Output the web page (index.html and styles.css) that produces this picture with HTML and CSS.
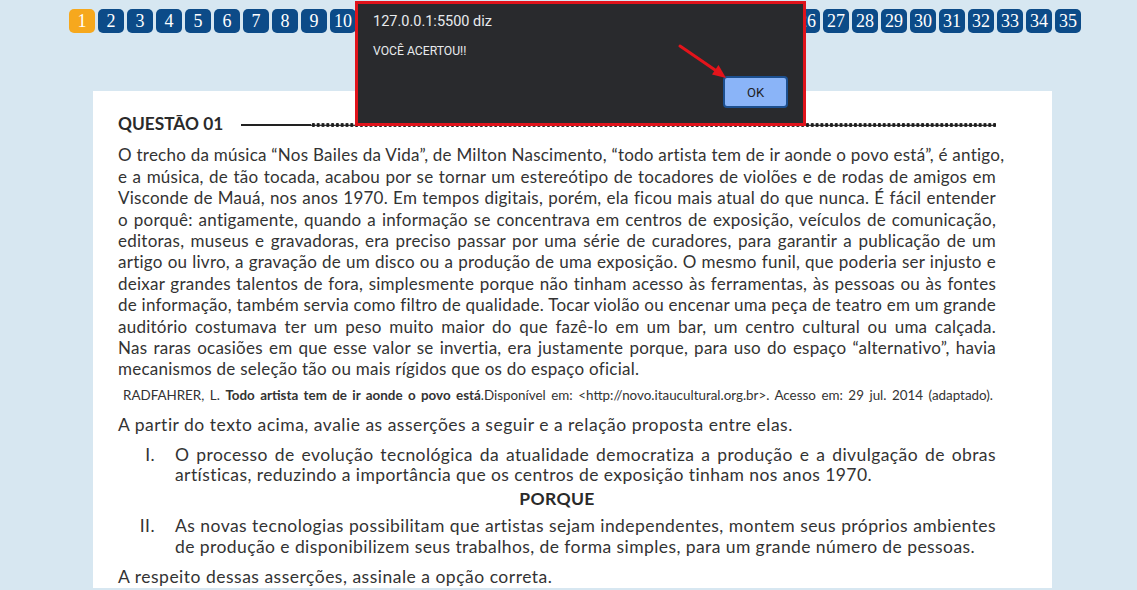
FILE: index.html
```html
<!DOCTYPE html>
<html lang="pt-BR">
<head>
<meta charset="utf-8">
<title>Questão 01</title>
<link rel="stylesheet" href="styles.css">
</head>
<body>
<nav class="pager">
  <span class="pg pg-active">1</span><span class="pg">2</span><span class="pg">3</span><span class="pg">4</span><span class="pg">5</span><span class="pg">6</span><span class="pg">7</span><span class="pg">8</span><span class="pg">9</span><span class="pg">10</span><span class="pg">11</span><span class="pg">12</span><span class="pg">13</span><span class="pg">14</span><span class="pg">15</span><span class="pg">16</span><span class="pg">17</span><span class="pg">18</span><span class="pg">19</span><span class="pg">20</span><span class="pg">21</span><span class="pg">22</span><span class="pg">23</span><span class="pg">24</span><span class="pg">25</span><span class="pg">26</span><span class="pg">27</span><span class="pg">28</span><span class="pg">29</span><span class="pg">30</span><span class="pg">31</span><span class="pg">32</span><span class="pg">33</span><span class="pg">34</span><span class="pg">35</span>
</nav>

<main class="sheet">
  <div class="q-head">
    <span class="q-title">QUESTÃO 01</span>
    <span class="q-solid"></span>
    <span class="q-dots"></span>
  </div>

  <div class="text">
    <span class="ln">O trecho da música “Nos Bailes da Vida”, de Milton Nascimento, “todo artista tem de ir aonde o povo está”, é antigo,</span>
    <span class="ln">e a música, de tão tocada, acabou por se tornar um estereótipo de tocadores de violões e de rodas de amigos em</span>
    <span class="ln">Visconde de Mauá, nos anos 1970. Em tempos digitais, porém, ela ficou mais atual do que nunca. É fácil entender</span>
    <span class="ln">o porquê: antigamente, quando a informação se concentrava em centros de exposição, veículos de comunicação,</span>
    <span class="ln">editoras, museus e gravadoras, era preciso passar por uma série de curadores, para garantir a publicação de um</span>
    <span class="ln">artigo ou livro, a gravação de um disco ou a produção de uma exposição. O mesmo funil, que poderia ser injusto e</span>
    <span class="ln">deixar grandes talentos de fora, simplesmente porque não tinham acesso às ferramentas, às pessoas ou às fontes</span>
    <span class="ln">de informação, também servia como filtro de qualidade. Tocar violão ou encenar uma peça de teatro em um grande</span>
    <span class="ln">auditório costumava ter um peso muito maior do que fazê-lo em um bar, um centro cultural ou uma calçada.</span>
    <span class="ln">Nas raras ocasiões em que esse valor se invertia, era justamente porque, para uso do espaço “alternativo”, havia</span>
    <span class="ln ln-last">mecanismos de seleção tão ou mais rígidos que os do espaço oficial.</span>
  </div>

  <p class="ref">RADFAHRER, L. <b>Todo artista tem de ir aonde o povo está</b>.Disponível em: &lt;http://novo.itaucultural.org.br&gt;. Acesso em: 29 jul. 2014 (adaptado).</p>

  <p class="lead">A partir do texto acima, avalie as asserções a seguir e a relação proposta entre elas.</p>

  <div class="item item-1">
    <span class="num">I.</span>
    <div class="item-text">
      <span class="ln">O processo de evolução tecnológica da atualidade democratiza a produção e a divulgação de obras</span>
      <span class="ln ln-last">artísticas, reduzindo a importância que os centros de exposição tinham nos anos 1970.</span>
    </div>
  </div>

  <p class="porque">PORQUE</p>

  <div class="item item-2">
    <span class="num">II.</span>
    <div class="item-text">
      <span class="ln">As novas tecnologias possibilitam que artistas sejam independentes, montem seus próprios ambientes</span>
      <span class="ln ln-last">de produção e disponibilizem seus trabalhos, de forma simples, para um grande número de pessoas.</span>
    </div>
  </div>

  <p class="lead lead-end">A respeito dessas asserções, assinale a opção correta.</p>
</main>

<div class="dialog" role="alertdialog">
  <p class="dlg-title">127.0.0.1:5500 diz</p>
  <p class="dlg-msg">VOCÊ ACERTOU!!</p>
  <button class="dlg-ok">OK</button>
</div>

<svg class="arrow" width="60" height="45" viewBox="0 0 60 45">
  <line x1="4" y1="3" x2="42" y2="29" stroke="#e3141b" stroke-width="3" stroke-linecap="round"/>
  <polygon points="50,35 36,31.5 42.5,22" fill="#e3141b"/>
</svg>
</body>
</html>
```

FILE: styles.css
```css
* { box-sizing: border-box; }

html, body {
  margin: 0;
  padding: 0;
}

body {
  width: 1137px;
  height: 590px;
  overflow: hidden;
  background: #d7e7f1;
  position: relative;
}

/* pagination */
.pager {
  display: flex;
  gap: 3px;
  padding: 9px 0 0 69px;
  height: 33px;
}

.pg {
  flex: 0 0 26px;
  height: 24px;
  border-radius: 5px;
  background: #0c4b88;
  color: #fff;
  font-family: "Liberation Serif", serif;
  font-size: 18px;
  display: flex;
  align-items: center;
  justify-content: center;
  line-height: 1;
}

.pg-active {
  background: #f6a81d;
}

/* question sheet */
.sheet {
  margin: 58px 0 0 93px;
  width: 959px;
  height: 497px;
  background: #fff;
  padding: 22px 56px 0 25px;
  color: #333;
  font-family: Lato, "Liberation Sans", sans-serif;
}

.q-head {
  display: flex;
  align-items: center;
  height: 20px;
}

.q-title {
  font-weight: 700;
  font-size: 17.3px;
  color: #2a2a2a;
}

.q-solid {
  width: 70px;
  height: 2px;
  margin-left: 18px;
  margin-top: 4px;
  background: #222;
}

.q-dots {
  flex: 1;
  height: 6px;
  margin-top: 4px;
  background:
    radial-gradient(circle, #1e1e1e 1.7px, transparent 2.1px) 0 0 / 4.8px 6px repeat-x,
    linear-gradient(#444, #444) 0 2.5px / 100% 1px no-repeat;
}

.ln {
  display: block;
  text-align: justify;
  text-align-last: justify;
  white-space: nowrap;
}

.ln-last {
  text-align-last: left;
}

.text {
  margin-top: 11.3px;
  font-size: 17px;
  line-height: 21.4px;
  letter-spacing: 0.25px;
}

.ref {
  margin: 6.3px 0 0 5px;
  width: 870px;
  font-size: 13.4px;
  line-height: 18px;
  text-align: justify;
  text-align-last: justify;
  white-space: nowrap;
}

.ref b {
  font-weight: 700;
}

.lead {
  margin: 9.5px 0 0;
  font-size: 17.5px;
  line-height: 21px;
  letter-spacing: 0.5px;
}

.item {
  display: grid;
  grid-template-columns: 37px 821px;
  column-gap: 20px;
  font-size: 17.5px;
  letter-spacing: 0.42px;
}

.item-1 {
  margin-top: 10.25px;
  line-height: 20.5px;
}

.item-2 {
  margin-top: 5.5px;
  line-height: 21px;
}

.num {
  text-align: right;
}

.porque {
  margin: 3.25px 0 0;
  font-weight: 700;
  font-size: 17.5px;
  line-height: 20px;
  letter-spacing: 0.4px;
  text-align: center;
  color: #2a2a2a;
}

.lead-end {
  margin-top: 9px;
}

/* browser alert overlay */
.dialog {
  position: absolute;
  left: 355px;
  top: 1px;
  width: 451px;
  height: 125px;
  background: #292a2d;
  border: 3px solid #e0131b;
  font-family: Roboto, "Liberation Sans", sans-serif;
  color: #e8eaed;
  padding: 8px 0 0 15px;
}

.dlg-title {
  margin: 0;
  font-size: 14.5px;
  line-height: 20px;
}

.dlg-msg {
  margin: 10px 0 0;
  font-size: 12.2px;
  line-height: 18px;
}

.dlg-ok {
  position: absolute;
  left: 365px;
  top: 72px;
  width: 65px;
  height: 32px;
  border: 2px solid #1c4f8f;
  border-radius: 4px;
  background: #8ab4f8;
  color: #202124;
  font-family: Roboto, "Liberation Sans", sans-serif;
  font-size: 13px;
  padding: 0;
}

.arrow {
  position: absolute;
  left: 676px;
  top: 43px;
}
```
